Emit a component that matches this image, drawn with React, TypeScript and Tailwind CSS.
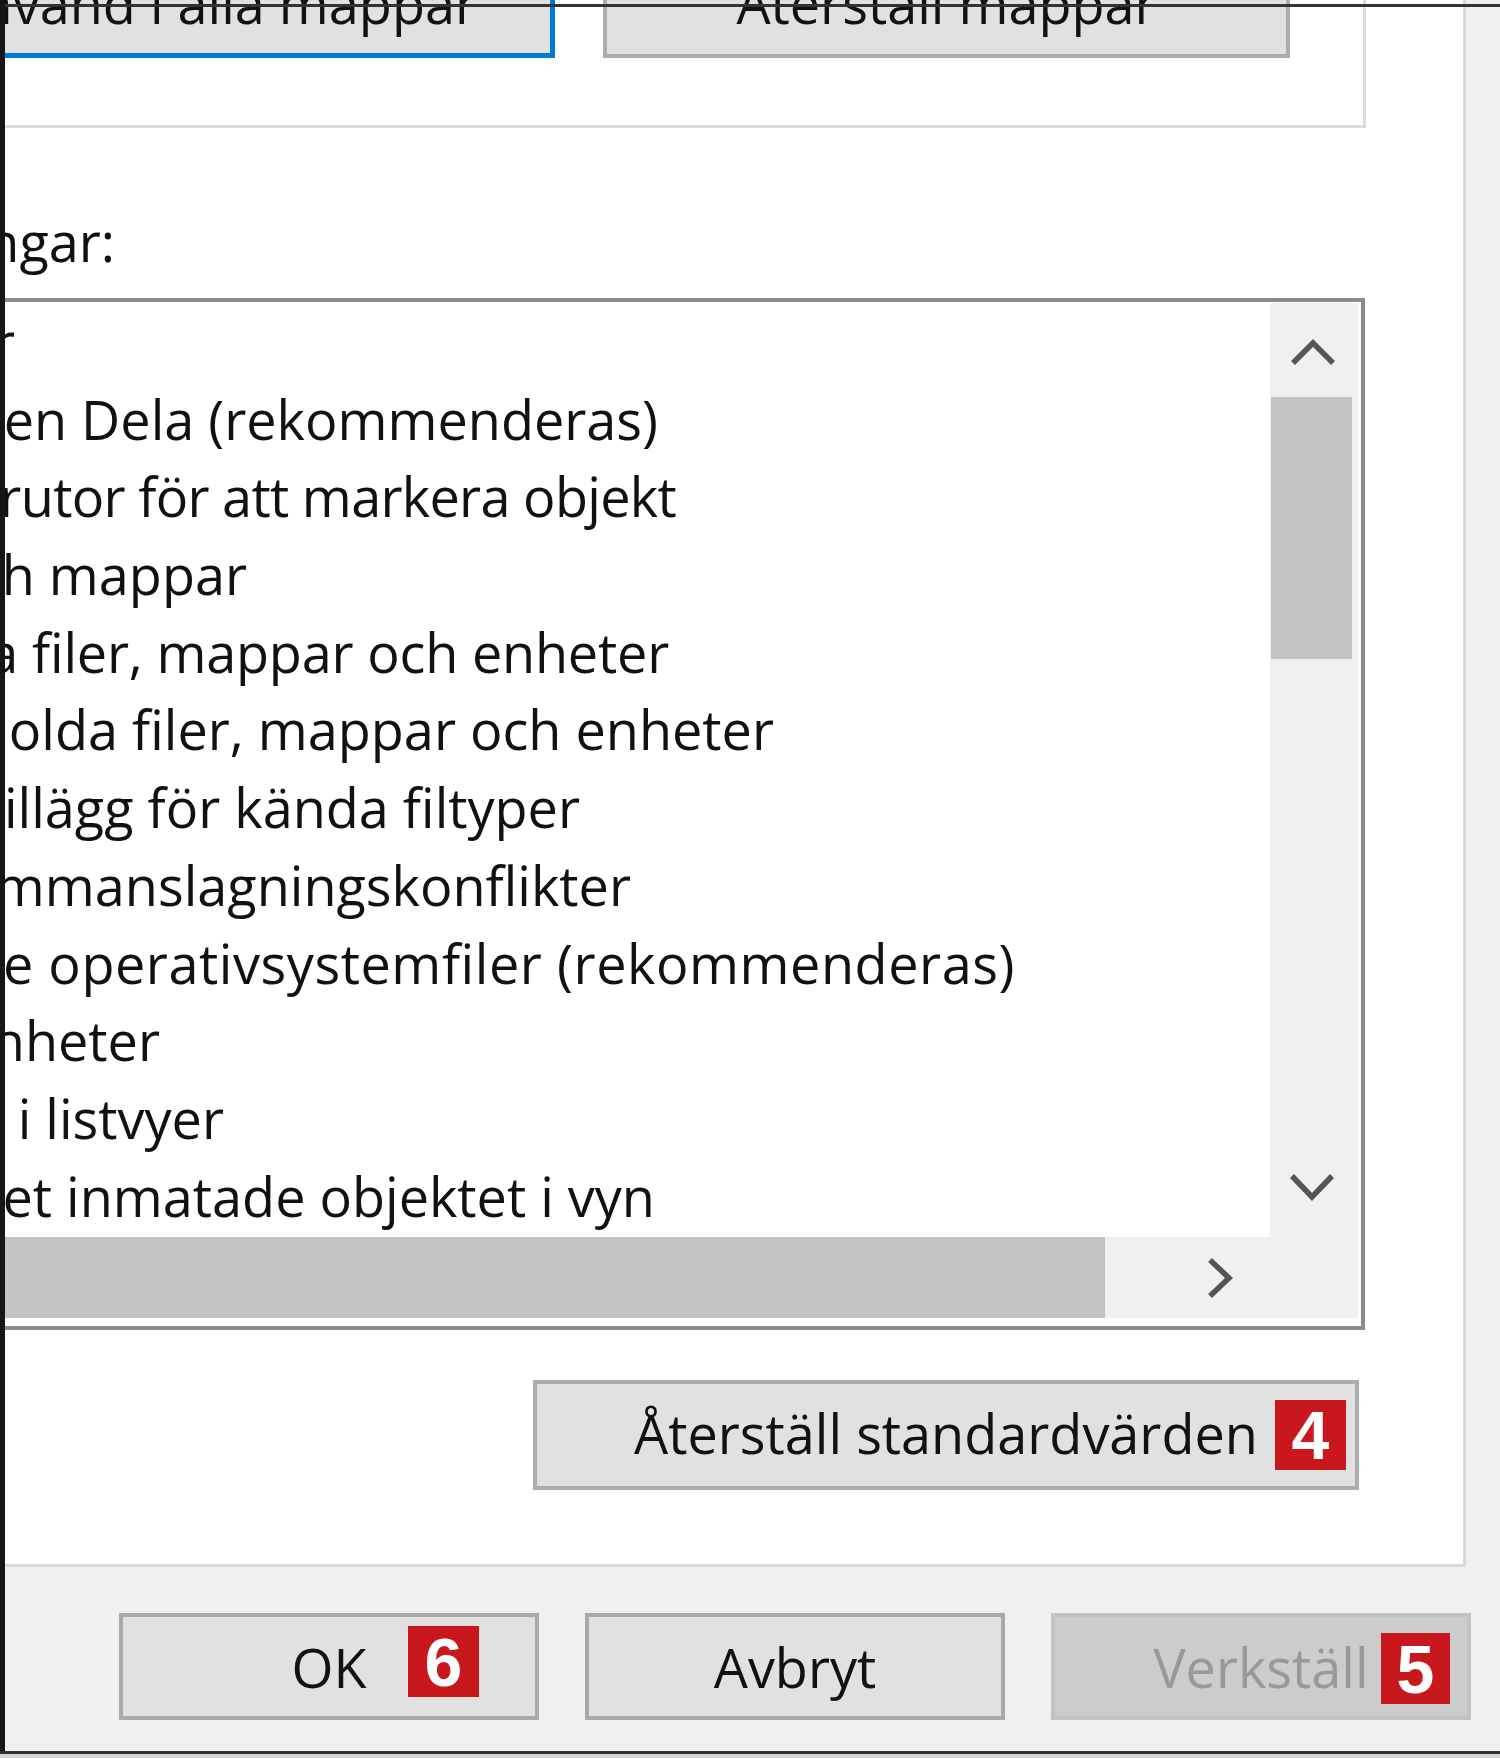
import React from "react";

const rows: { text: string; end: number; cls?: string }[] = [
  { text: "Alltid visa menyer", end: 15 },
  { text: "Använd guiden Dela (rekommenderas)", end: 658 },
  { text: "Använd kryssrutor för att markera objekt", end: 676, cls: "tracking-[-0.7px]" },
  { text: "Dolda filer och mappar", end: 247 },
  { text: "Visa inte dolda filer, mappar och enheter", end: 669, cls: "tracking-[-0.2px]" },
  { text: "Visa dolda filer, mappar och enheter", end: 774 },
  { text: "Dölj filnamnstillägg för kända filtyper", end: 580 },
  { text: "Dölj mappsammanslagningskonflikter", end: 631 },
  { text: "Dölj skyddade operativsystemfiler (rekommenderas)", end: 1015, cls: "tracking-[0.55px]" },
  { text: "Dölj tomma enheter", end: 160 },
  { text: "När du skriver i listvyer", end: 224 },
  { text: "Markera det inmatade objektet i vyn", end: 655 },
];

function Badge({ n, className }: { n: string; className: string }) {
  return (
    <div
      className={
        "absolute flex items-center justify-center bg-[#c9171e] text-white font-['Liberation_Sans',Arial,sans-serif] font-bold text-[68px] leading-none " +
        className
      }
    >
      {n}
    </div>
  );
}

function ChevronUp() {
  return (
    <svg width="46" height="30" viewBox="0 0 46 30" fill="none">
      <path d="M3 26 L23 6 L43 26" stroke="#555555" strokeWidth="5.5" strokeLinejoin="miter" />
    </svg>
  );
}

function ChevronDown() {
  return (
    <svg width="46" height="30" viewBox="0 0 46 30" fill="none">
      <path d="M3 4 L23 25 L43 4" stroke="#555555" strokeWidth="5.5" strokeLinejoin="miter" />
    </svg>
  );
}

function ChevronRight() {
  return (
    <svg width="30" height="42" viewBox="0 0 30 42" fill="none">
      <path d="M5 3 L24 21 L5 39" stroke="#555555" strokeWidth="5.5" strokeLinejoin="miter" />
    </svg>
  );
}

export default function App() {
  return (
    <div className="relative w-[1500px] h-[1758px] overflow-hidden bg-[#f0f0f0] text-[#111] font-['Open_Sans','Noto_Sans',sans-serif] text-[54px]">
      <div className="flex flex-col">
        {/* Tab page */}
        <div className="w-[1466px] h-[1567px] bg-white border-r-[3px] border-b-[3px] border-[#d9d9d9] flex flex-col overflow-hidden">
          {/* Group box with folder view buttons */}
          <div className="w-[1366px] h-[128px] shrink-0 border-r-[3px] border-b-[3px] border-[#dcdcdc]">
            <div className="flex h-[58px]">
              <div className="w-[555px] h-[58px] bg-[#e1e1e1] border-b-[5px] border-r-[5px] border-[#0078d7] flex justify-end items-start pr-[73px] overflow-hidden">
                <span className="whitespace-nowrap leading-[74px] -mt-[34px]">Använd i alla mappar</span>
              </div>
              <div className="ml-[48px] w-[687px] h-[58px] bg-[#e1e1e1] border-b-[4px] border-x-[4px] border-[#adadad] flex justify-center items-start overflow-hidden">
                <span className="whitespace-nowrap leading-[74px] -mt-[34px]">Återställ mappar</span>
              </div>
            </div>
          </div>

          {/* Label */}
          <div className="h-[170px] shrink-0 pt-[76px] overflow-hidden">
            <div className="w-[115px] flex justify-end whitespace-nowrap leading-[74px]">
              Avancerade inställningar:
            </div>
          </div>

          {/* List box */}
          <div className="w-[1365px] h-[1032px] shrink-0 border-t-[4px] border-r-[4px] border-b-[4px] border-[#888c90] flex flex-col bg-white">
            <div className="flex h-[935px]">
              <div className="flex-1 overflow-hidden pt-[1px]">
                {rows.map((r, i) => (
                  <div
                    key={i}
                    className={"h-[77.7px] leading-[77.7px] flex justify-end whitespace-nowrap " + (r.cls ?? "")}
                    style={{ width: r.end }}
                  >
                    {r.text}
                  </div>
                ))}
              </div>
              {/* Vertical scrollbar */}
              <div className="w-[88px] mt-[1px] bg-[#f0f0f0] flex flex-col">
                <div className="h-[94px] flex items-center justify-center pt-[4px] pr-[2px]">
                  <ChevronUp />
                </div>
                <div className="ml-[1px] w-[81px] h-[262px] bg-[#c2c3c3]" />
                <div className="flex-1" />
                <div className="h-[100px] flex items-center justify-center pr-[4px]">
                  <ChevronDown />
                </div>
              </div>
              <div className="w-[3px]" />
            </div>
            {/* Horizontal scrollbar */}
            <div className="flex h-[81px]">
              <div className="w-[1105px] bg-[#c2c3c3]" />
              <div className="flex-1 bg-[#f0f0f0] flex justify-end">
                <div className="w-[100px] flex items-center justify-center">
                  <ChevronRight />
                </div>
              </div>
              <div className="w-[88px] bg-[#f0f0f0]" />
              <div className="w-[3px]" />
            </div>
            <div className="flex-1" />
          </div>

          {/* Restore defaults */}
          <div className="mt-[50px] ml-[533px] w-[826px] h-[110px] shrink-0 relative bg-[#e1e1e1] border-[4px] border-[#adadad] flex items-center justify-center">
            <span className="whitespace-nowrap leading-[74px] mt-[-4px]">Återställ standardvärden</span>
            <Badge n="4" className="left-[738px] top-[16px] w-[71px] h-[70px]" />
          </div>
        </div>

        {/* Bottom dialog buttons */}
        <div className="flex pt-[46px] pl-[119px] gap-[46px]">
          <div className="relative w-[420px] h-[107px] bg-[#e1e1e1] border-[4px] border-[#a9a9a9] flex items-center justify-center">
            <span className="whitespace-nowrap leading-[74px]">OK</span>
            <Badge n="6" className="left-[285px] top-[9px] w-[71px] h-[71px]" />
          </div>
          <div className="relative w-[420px] h-[107px] bg-[#e1e1e1] border-[4px] border-[#a9a9a9] flex items-center justify-center">
            <span className="whitespace-nowrap leading-[74px]">Avbryt</span>
          </div>
          <div className="relative w-[420px] h-[107px] bg-[#cccccc] border-[4px] border-[#c2c2c2] flex items-center justify-center">
            <span className="whitespace-nowrap leading-[74px] text-[#999999]">Verkställ</span>
            <Badge n="5" className="left-[326px] top-[16px] w-[69px] h-[71px]" />
          </div>
        </div>
      </div>

      {/* Screenshot frame lines */}
      <div className="absolute left-0 top-[4px] w-[1500px] h-[3px] bg-[#333333]" />
      <div className="absolute left-0 top-0 w-[5px] h-[1754px] bg-[#161616]" />
      <div className="absolute left-0 top-[1751px] w-[1500px] h-[3px] bg-[#333333]" />
      <div className="absolute left-0 top-[1754px] w-[1500px] h-[4px] bg-[#d4d4d4]" />
    </div>
  );
}
